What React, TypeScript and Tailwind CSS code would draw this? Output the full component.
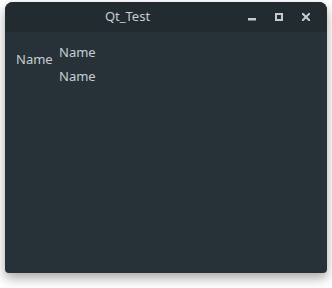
import React from "react";

const font = { fontFamily: '"Noto Sans", "Open Sans", sans-serif' };

const TitleButtons = () => (
  <div className="flex items-center gap-[19px] pr-[17px]">
    {/* minimize */}
    <svg width="8" height="8" viewBox="0 0 8 8">
      <rect x="0" y="5" width="8" height="2.5" fill="#c3cbcf" />
    </svg>
    {/* maximize */}
    <svg width="8" height="8" viewBox="0 0 8 8">
      <rect x="1" y="1" width="6" height="6" fill="none" stroke="#c3cbcf" strokeWidth="2" />
    </svg>
    {/* close */}
    <svg width="8" height="8" viewBox="0 0 8 8">
      <path d="M0.8 0.8 L7.2 7.2 M7.2 0.8 L0.8 7.2" stroke="#c3cbcf" strokeWidth="2" strokeLinecap="square" />
    </svg>
  </div>
);

export default function App() {
  return (
    <div className="w-[332px] h-[288px] bg-white pt-[2px] pl-[5px]" style={font}>
      <div className="w-[322px] h-[271px] flex flex-col rounded-t-[8px] rounded-b-[4px] overflow-hidden bg-[#263238] shadow-[0_5px_12px_rgba(0,0,0,0.35)]">
        <div className="h-[30px] flex items-center bg-[#222b30] shrink-0">
          <div className="flex-1 text-center text-[13px] text-[#c7ced2] pl-[2px]">Qt_Test</div>
          <TitleButtons />
        </div>
        <div className="flex pl-[11px] pt-[11px] text-[13px] text-[#c7ced2] leading-[18px]">
          <div className="mt-[7px] w-[43px]">Name</div>
          <div className="flex flex-col gap-[6px]">
            <div>Name</div>
            <div>Name</div>
          </div>
        </div>
      </div>
    </div>
  );
}
